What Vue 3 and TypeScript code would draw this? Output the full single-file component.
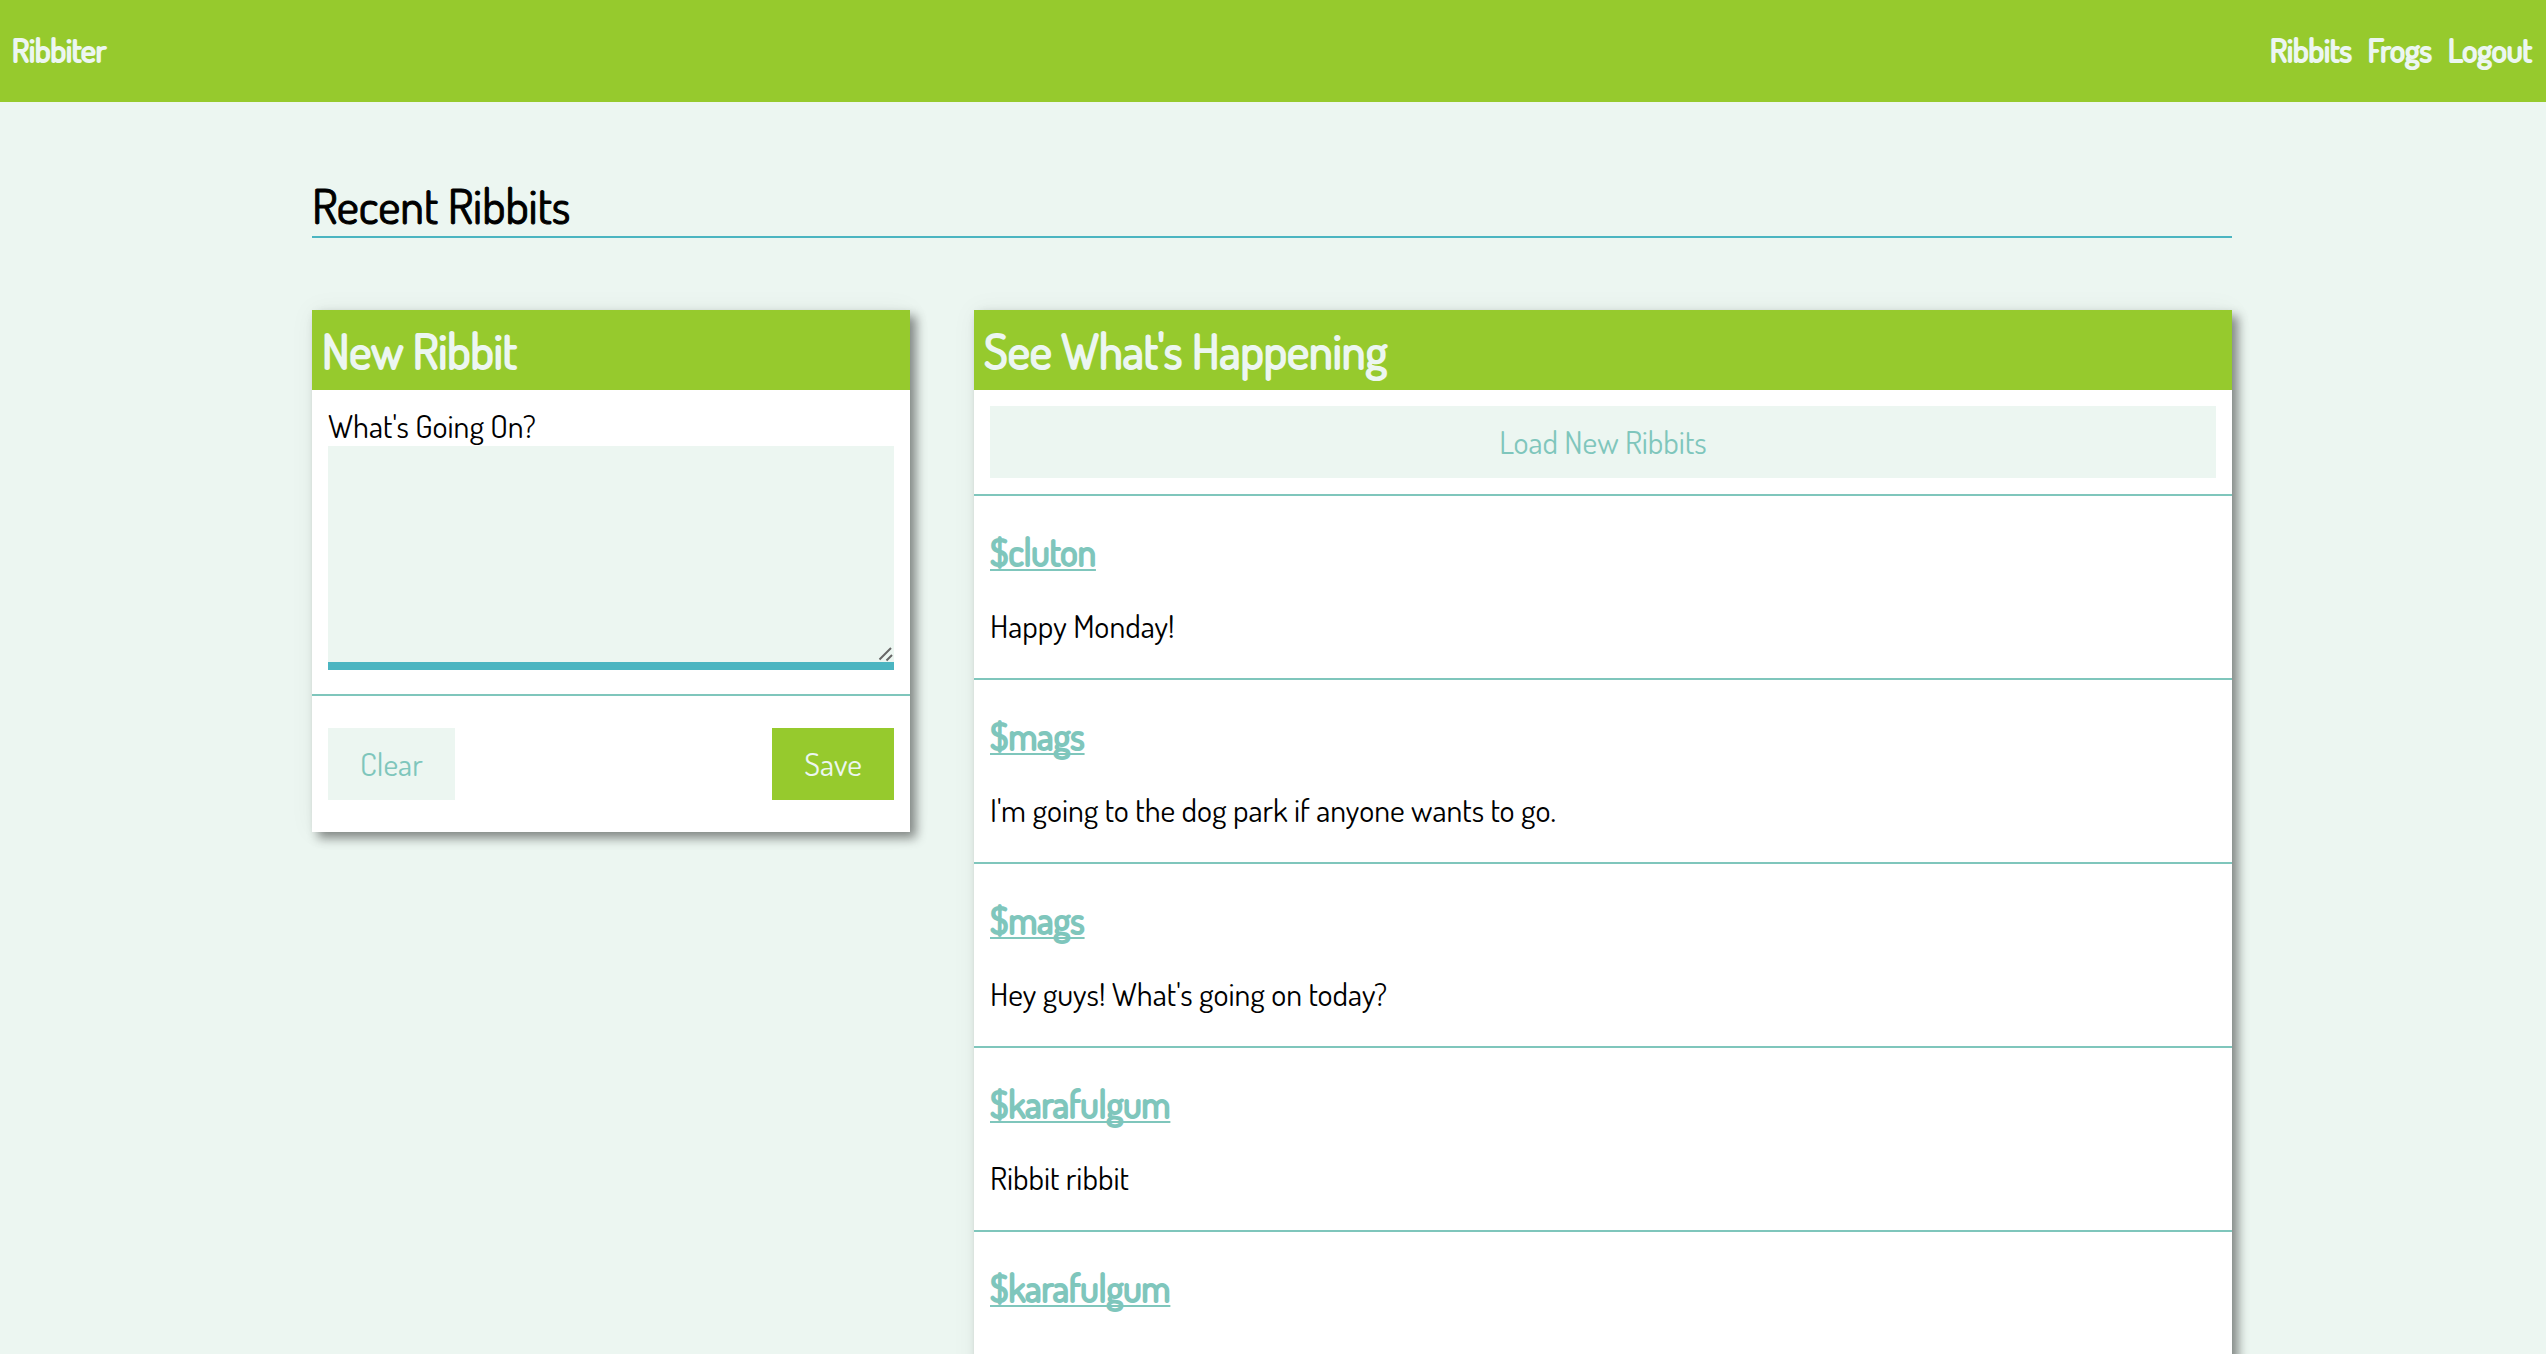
<script setup lang="ts">
import { ref } from 'vue'

interface Ribbit {
  id: number
  author: string
  message?: string
}

const draft = ref('')

const links: string[] = ['Ribbits', 'Frogs', 'Logout']

const ribbits: Ribbit[] = [
  { id: 1, author: '$cluton', message: 'Happy Monday!' },
  { id: 2, author: '$mags', message: "I'm going to the dog park if anyone wants to go." },
  { id: 3, author: '$mags', message: "Hey guys! What's going on today?" },
  { id: 4, author: '$karafulgum', message: 'Ribbit ribbit' },
  { id: 5, author: '$karafulgum' },
]
</script>

<template>
  <div class="page">
    <header class="nav">
      <a class="nav-link" href="#">Ribbiter</a>
      <nav class="nav-links">
        <a v-for="link in links" :key="link" class="nav-link" href="#">{{ link }}</a>
      </nav>
    </header>

    <main class="content">
      <h1 class="title">Recent Ribbits</h1>

      <div class="columns">
        <form class="card" @submit.prevent>
          <h2 class="card-title">New Ribbit</h2>
          <div class="field">
            <label class="label" for="ribbit">What's Going On?</label>
            <div class="input-wrap">
              <textarea id="ribbit" v-model="draft" class="input"></textarea>
              <svg class="grip" viewBox="0 0 16 16" aria-hidden="true">
                <path d="M1.5 13.5 13 2M8.5 14.5 14 9" />
              </svg>
            </div>
          </div>
          <div class="actions">
            <button class="button" type="button" @click="draft = ''">Clear</button>
            <button class="button primary" type="submit">Save</button>
          </div>
        </form>

        <section class="card">
          <h2 class="card-title">See What's Happening</h2>
          <div class="load">
            <button class="button wide" type="button">Load New Ribbits</button>
          </div>
          <article v-for="ribbit in ribbits" :key="ribbit.id" class="ribbit">
            <h3 class="author"><a class="author-link" href="#">{{ ribbit.author }}</a></h3>
            <p v-if="ribbit.message" class="message">{{ ribbit.message }}</p>
          </article>
        </section>
      </div>
    </main>
  </div>
</template>

<style>
body {
  margin: 0;
  background: #ecf6f1;
}
</style>

<style scoped>
.page {
  color: #000;
  font-family: 'Dosis', 'Liberation Sans Narrow', 'Lato', sans-serif;
  font-size: 32px;
  line-height: 40px;
}

.page * {
  box-sizing: border-box;
}

.nav {
  display: flex;
  justify-content: space-between;
  padding: 30px 14px 32px 12px;
  background: #96ca2d;
}

.nav-links {
  display: flex;
  gap: 16px;
}

/* Emphasis thickens the regular weight so that the letter widths stay narrow. */
.nav-link,
.card-title,
.author {
  font-weight: normal;
  -webkit-text-stroke: 2px currentColor;
}

.nav-link {
  color: #ecf6f1;
  text-decoration: none;
}

.content {
  max-width: 1922px;
  margin: 0 auto;
  padding: 75px 2px 0 0;
}

.title {
  margin: 0 0 72px;
  padding-bottom: 3px;
  border-bottom: 2px solid #4bb5c1;
  font-size: 48px;
  font-weight: normal;
  line-height: 56px;
  -webkit-text-stroke: 1px currentColor;
}

.columns {
  display: grid;
  grid-template-columns: 598fr 1258fr;
  gap: 64px;
  align-items: start;
}

.card {
  background: #fff;
  box-shadow: 6px 6px 10px rgba(0, 0, 0, 0.44), 0 0 24px rgba(0, 0, 0, 0.05);
}

.card-title {
  margin: 0;
  padding: 12px 10px;
  background: #96ca2d;
  color: #ecf6f1;
  font-size: 48px;
  line-height: 56px;
}

.field {
  padding: 16px 16px 24px;
}

.label {
  display: block;
}

.input-wrap {
  position: relative;
}

.input {
  display: block;
  width: 100%;
  height: 224px;
  padding: 8px;
  border: 0;
  border-bottom: 8px solid #4bb5c1;
  border-radius: 0;
  outline: 0;
  background: #ecf6f1;
  font: inherit;
  resize: none;
}

.grip {
  position: absolute;
  right: 0;
  bottom: 8px;
  width: 16px;
  height: 16px;
  fill: none;
  stroke: #666;
  stroke-width: 2;
  pointer-events: none;
}

.actions {
  display: flex;
  justify-content: space-between;
  padding: 32px 16px;
  border-top: 2px solid #7fc6bc;
}

.button {
  padding: 16px 32px;
  border: 0;
  background: #ecf6f1;
  color: #7fc6bc;
  font: inherit;
  cursor: pointer;
}

.primary {
  background: #96ca2d;
  color: #ecf6f1;
}

.wide {
  display: block;
  width: 100%;
}

.load {
  padding: 16px;
}

.ribbit {
  min-height: 184px;
  padding: 32px 16px;
  border-top: 2px solid #7fc6bc;
}

.author {
  margin: 0 0 30px;
  font-size: 37px;
  line-height: 48px;
}

.author-link {
  color: #7fc6bc;
  text-decoration-thickness: 2px;
  text-decoration-skip-ink: none;
  text-underline-offset: 3px;
}

.message {
  margin: 0;
}
</style>
